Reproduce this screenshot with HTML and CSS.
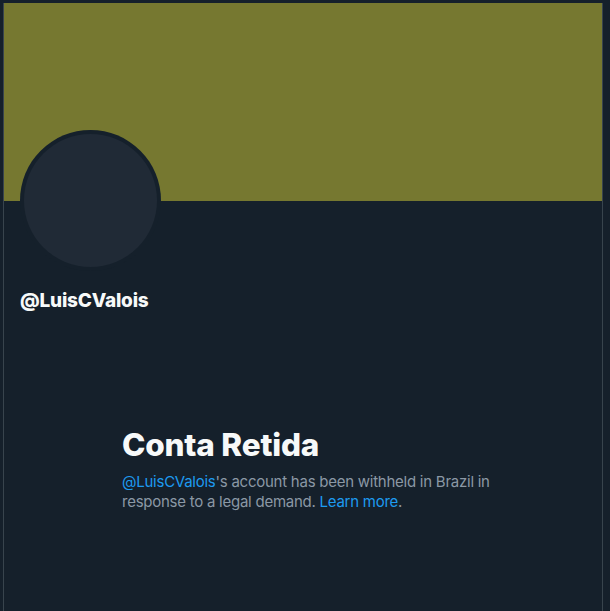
FILE: index.html
```html
<!DOCTYPE html>
<html lang="pt">
<head>
    <meta charset="UTF-8">
    <meta name="viewport" content="width=device-width, initial-scale=1.0">
    <title>@LuisCValois</title>
    <link rel="stylesheet" href="styles.css">
</head>
<body>
    <div class="column">
        <div class="banner"></div>
        <div class="profile">
            <div class="avatar"><div class="avatar-inner"></div></div>
            <div class="handle">@LuisCValois</div>
        </div>
        <div class="withheld">
            <h2>Conta Retida</h2>
            <p><a href="#">@LuisCValois</a>'s account has been withheld in Brazil in response to a legal demand. <a href="#">Learn more</a>.</p>
        </div>
    </div>
</body>
</html>
```

FILE: styles.css
```css
body {
    margin: 0;
    background-color: #15202b;
    font-family: Inter, "Noto Sans", Arial, sans-serif;
    color: #f7f9f9;
    padding-top: 3px;
}
.column {
    margin-left: 3px;
    width: 598px;
    min-height: 608px;
    border-left: 1px solid #38444d;
    border-right: 1px solid #38444d;
}
.banner {
    height: 198px;
    background-color: #767830;
}
.profile {
    padding: 0 16px;
}
.avatar {
    margin-top: -71px;
    width: 141px;
    height: 141px;
    border-radius: 50%;
    background-color: #15202b;
    display: flex;
    align-items: center;
    justify-content: center;
}
.avatar-inner {
    width: 133px;
    height: 133px;
    border-radius: 50%;
    background-color: #202a36;
}
.handle {
    margin-top: 18px;
    font-size: 19px;
    font-weight: 800;
    line-height: 24px;
    letter-spacing: -0.2px;
}
.withheld {
    width: 372px;
    margin: 114px 0 0 118px;
}
.withheld h2 {
    margin: 0 0 9px;
    font-size: 31.5px;
    font-weight: 800;
    line-height: 36px;
    letter-spacing: -0.2px;
}
.withheld p {
    margin: 0;
    font-size: 15px;
    line-height: 20px;
    letter-spacing: -0.25px;
    color: #8b98a5;
}
.withheld a {
    color: #1d9bf0;
    text-decoration: none;
}
```
